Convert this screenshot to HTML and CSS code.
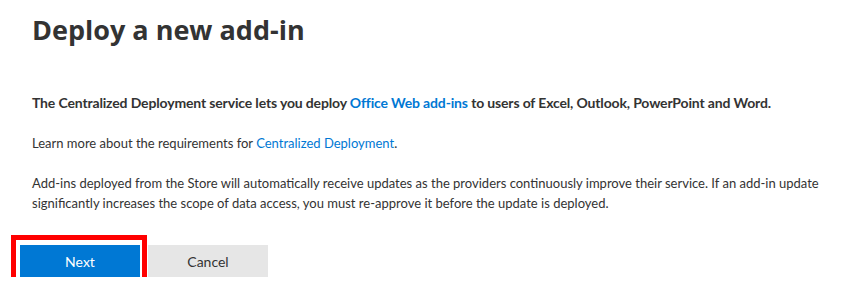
FILE: index.html
```html
<!DOCTYPE html>
<html lang="en">
<head>
    <meta charset="UTF-8">
    <meta name="viewport" content="width=device-width, initial-scale=1.0">
    <title>Deploy a new add-in</title>
    <link rel="stylesheet" href="styles.css">
</head>
<body>
    <div class="panel">
        <h1 class="panel-title">Deploy a new add-in</h1>

        <p class="intro">The Centralized Deployment service lets you deploy <a href="#">Office Web add-ins</a> to users of Excel, Outlook, PowerPoint and Word.</p>

        <p>Learn more about the requirements for <a href="#">Centralized Deployment</a>.</p>

        <p>Add-ins deployed from the Store will automatically receive updates as the providers continuously improve their service. If an add-in update significantly increases the scope of data access, you must re-approve it before the update is deployed.</p>

        <div class="actions">
            <button class="btn btn-primary">Next</button>
            <button class="btn btn-default">Cancel</button>
            <!-- highlight round the Next button -->
            <span class="highlight"></span>
        </div>
    </div>
</body>
</html>
```

FILE: styles.css
```css
body {
    margin: 0;
    background: #fff;
    color: #333;
    font-family: Lato, "Open Sans", Arial, sans-serif;
    font-size: 13px;
}

.panel {
    padding: 0 0 0 32px;
    width: 800px;
}

.panel-title {
    margin: 0;
    padding-top: 12px;
    font-family: "Open Sans", Lato, Arial, sans-serif;
    font-size: 27px;
    line-height: 36px;
    font-weight: 700;
    color: #333;
}

.panel p {
    margin: 0 0 20px;
    line-height: 20px;
}

.panel .intro {
    margin-top: 45px;
    font-size: 14px;
    font-weight: 700;
    letter-spacing: -0.15px;
}

.panel a {
    color: #0078d4;
    text-decoration: none;
}

.actions {
    position: relative;
    display: flex;
    gap: 8px;
    margin: 32px 0 0 -12px;
}

.btn {
    width: 120px;
    height: 32px;
    border: none;
    font-family: inherit;
    font-size: 14px;
    cursor: pointer;
}

.btn-primary {
    background: #0078d4;
    color: #fff;
}

.btn-default {
    background: #e6e6e6;
    color: #333;
}

.highlight {
    position: absolute;
    left: -9px;
    top: -10px;
    width: 126px;
    height: 44px;
    border: 5px solid #f00;
    pointer-events: none;
}
```
